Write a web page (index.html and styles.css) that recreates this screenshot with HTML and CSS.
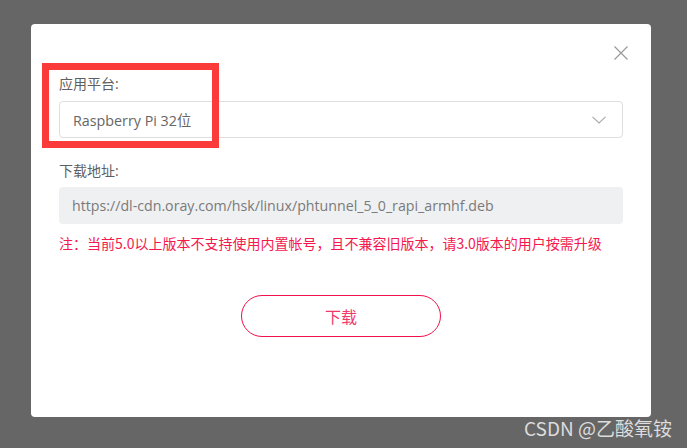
FILE: index.html
```html
<!DOCTYPE html>
<html lang="zh-CN">
<head>
<meta charset="utf-8">
<title>下载</title>
<link rel="stylesheet" href="styles.css">
</head>
<body>
<div class="dialog">
  <button class="close" aria-label="关闭">
    <svg viewBox="0 0 14 14" width="14" height="14"><path d="M0.5 0.5 L13.5 13.5 M13.5 0.5 L0.5 13.5" stroke="#9a9a9a" stroke-width="1.2" fill="none"/></svg>
  </button>
  <div class="field">
    <div class="label">应用平台:</div>
    <div class="select">
      <span class="select-text">Raspberry Pi 32位</span>
      <svg class="chevron" viewBox="0 0 14 8" width="14" height="8"><path d="M0.5 0.8 L7 7 L13.5 0.8" stroke="#a8a8a8" stroke-width="1.1" fill="none"/></svg>
    </div>
  </div>
  <div class="field field-2">
    <div class="label">下载地址:</div>
    <div class="input">https://dl-cdn.oray.com/hsk/linux/phtunnel_5_0_rapi_armhf.deb</div>
  </div>
  <p class="warning">注：当前5.0以上版本不支持使用内置帐号，且不兼容旧版本，请3.0版本的用户按需升级</p>
  <div class="actions">
    <button class="download">下载</button>
  </div>
  <div class="highlight"></div>
</div>
<div class="watermark">CSDN @乙酸氧铵</div>
</body>
</html>
```

FILE: styles.css
```css
html, body {
  margin: 0;
  height: 100%;
}
body {
  background: #666666;
  padding: 24px 36px 0 31px;
  box-sizing: border-box;
  font-family: "Open Sans", "Noto Sans CJK SC", sans-serif;
  position: relative;
  overflow: hidden;
}
.dialog {
  position: relative;
  background: #ffffff;
  border-radius: 4px;
  height: 393px;
  box-sizing: border-box;
  padding: 50px 28px 0 28px;
}
.close {
  position: absolute;
  top: 22px;
  right: 23px;
  width: 14px;
  height: 14px;
  padding: 0;
  border: 0;
  background: none;
  display: flex;
}
.field {
  display: flex;
  flex-direction: column;
  gap: 7px;
}
.field-2 {
  margin-top: 23px;
  gap: 6px;
}
.label {
  font-size: 14px;
  line-height: 20px;
  color: #5f5f5f;
}
.select {
  height: 37px;
  box-sizing: border-box;
  border: 1px solid #dedede;
  border-radius: 4px;
  display: flex;
  align-items: center;
  justify-content: space-between;
  padding: 0 16px 0 13px;
}
.select-text {
  font-size: 14.3px;
  color: #666666;
}
.chevron {
  display: block;
}
.input {
  height: 37px;
  box-sizing: border-box;
  background: #eff0f2;
  border-radius: 4px;
  display: flex;
  align-items: center;
  padding: 0 13px;
  font-size: 14.2px;
  color: #7a7a7a;
}
.warning {
  margin: 9px 0 0 0;
  font-size: 14px;
  line-height: 20px;
  color: #f4184f;
  font-family: "Noto Sans CJK SC", sans-serif;
}
.actions {
  display: flex;
  justify-content: center;
  margin-top: 42px;
}
.download {
  width: 200px;
  height: 42px;
  border: 1px solid #f0124c;
  border-radius: 21px;
  background: #ffffff;
  color: #f0396d;
  font-size: 16px;
  font-family: "Noto Sans CJK SC", sans-serif;
  padding: 0;
}
.highlight {
  position: absolute;
  left: 11px;
  top: 39px;
  width: 177px;
  height: 85px;
  box-sizing: border-box;
  border: 7px solid #fb3a3a;
}
.watermark {
  position: absolute;
  right: 15px;
  bottom: 8px;
  font-size: 19px;
  line-height: 24px;
  color: rgba(255, 255, 255, 0.78);
  font-family: "Noto Sans CJK SC", sans-serif;
}
```
